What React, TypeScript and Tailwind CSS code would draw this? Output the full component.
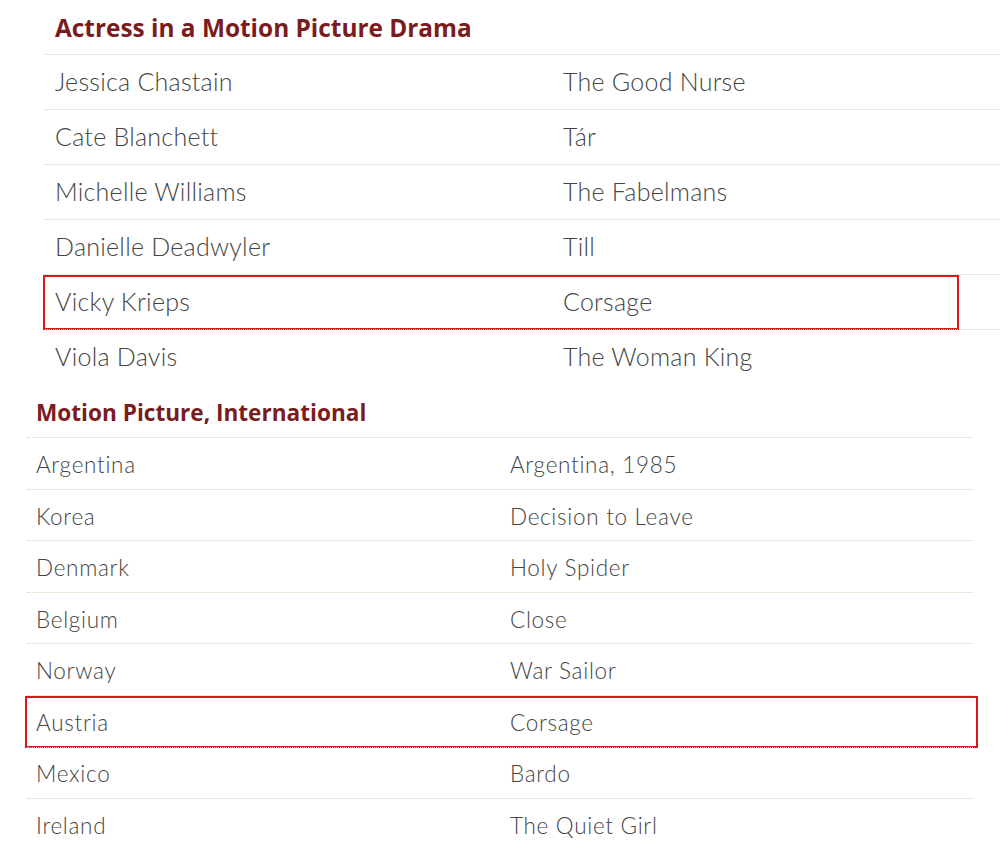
import React from "react";

type Row = { a: string; b: string; mark?: boolean };

const drama: Row[] = [
  { a: "Jessica Chastain", b: "The Good Nurse" },
  { a: "Cate Blanchett", b: "Tár" },
  { a: "Michelle Williams", b: "The Fabelmans" },
  { a: "Danielle Deadwyler", b: "Till" },
  { a: "Vicky Krieps", b: "Corsage", mark: true },
  { a: "Viola Davis", b: "The Woman King" },
];

const international: Row[] = [
  { a: "Argentina", b: "Argentina, 1985" },
  { a: "Korea", b: "Decision to Leave" },
  { a: "Denmark", b: "Holy Spider" },
  { a: "Belgium", b: "Close" },
  { a: "Norway", b: "War Sailor" },
  { a: "Austria", b: "Corsage", mark: true },
  { a: "Mexico", b: "Bardo" },
  { a: "Ireland", b: "The Quiet Girl" },
];

export default function App() {
  return (
    <div className="w-[1000px] h-[865px] overflow-hidden bg-white font-['Lato',sans-serif] font-light text-[#444]">
      {/* Actress in a Motion Picture Drama */}
      <section className="ml-[45px]">
        <h2 className="h-[54px] flex items-center pl-[10px] pt-[2px] text-[24.4px] font-bold text-[#7a1c1e] font-['Open_Sans',sans-serif]">
          Actress in a Motion Picture Drama
        </h2>
        {drama.map((r) => (
          <div
            key={r.a}
            className="relative grid grid-cols-[508px_1fr] items-center h-[55px] text-[25px] tracking-[0.25px] border-t border-dotted border-[#d6d1c2]"
          >
            <span className="pl-[10px]">{r.a}</span>
            <span className="pl-[10px]">{r.b}</span>
            {r.mark && (
              <div className="absolute left-[-2px] right-[41px] top-0 bottom-[-1px] border-2 border-[#d8161c]" />
            )}
          </div>
        ))}
      </section>

      {/* Motion Picture, International */}
      <section className="ml-[27px] w-[946px]">
        <h2 className="h-[53px] flex items-center pt-[5px] pl-[9px] text-[22.6px] font-bold text-[#7a1c1e] font-['Open_Sans',sans-serif]">
          Motion Picture, International
        </h2>
        {international.map((r) => (
          <div
            key={r.a}
            className="relative grid grid-cols-[474px_1fr] items-center h-[51.6px] pt-[3px] text-[22.5px] tracking-[0.7px] border-t border-dotted border-[#d6d1c2]"
          >
            <span className="pl-[9px]">{r.a}</span>
            <span className="pl-[9px]">{r.b}</span>
            {r.mark && (
              <div className="absolute left-[-2px] right-[-5px] top-0 bottom-[-1px] border-2 border-[#d8161c]" />
            )}
          </div>
        ))}
      </section>
    </div>
  );
}
